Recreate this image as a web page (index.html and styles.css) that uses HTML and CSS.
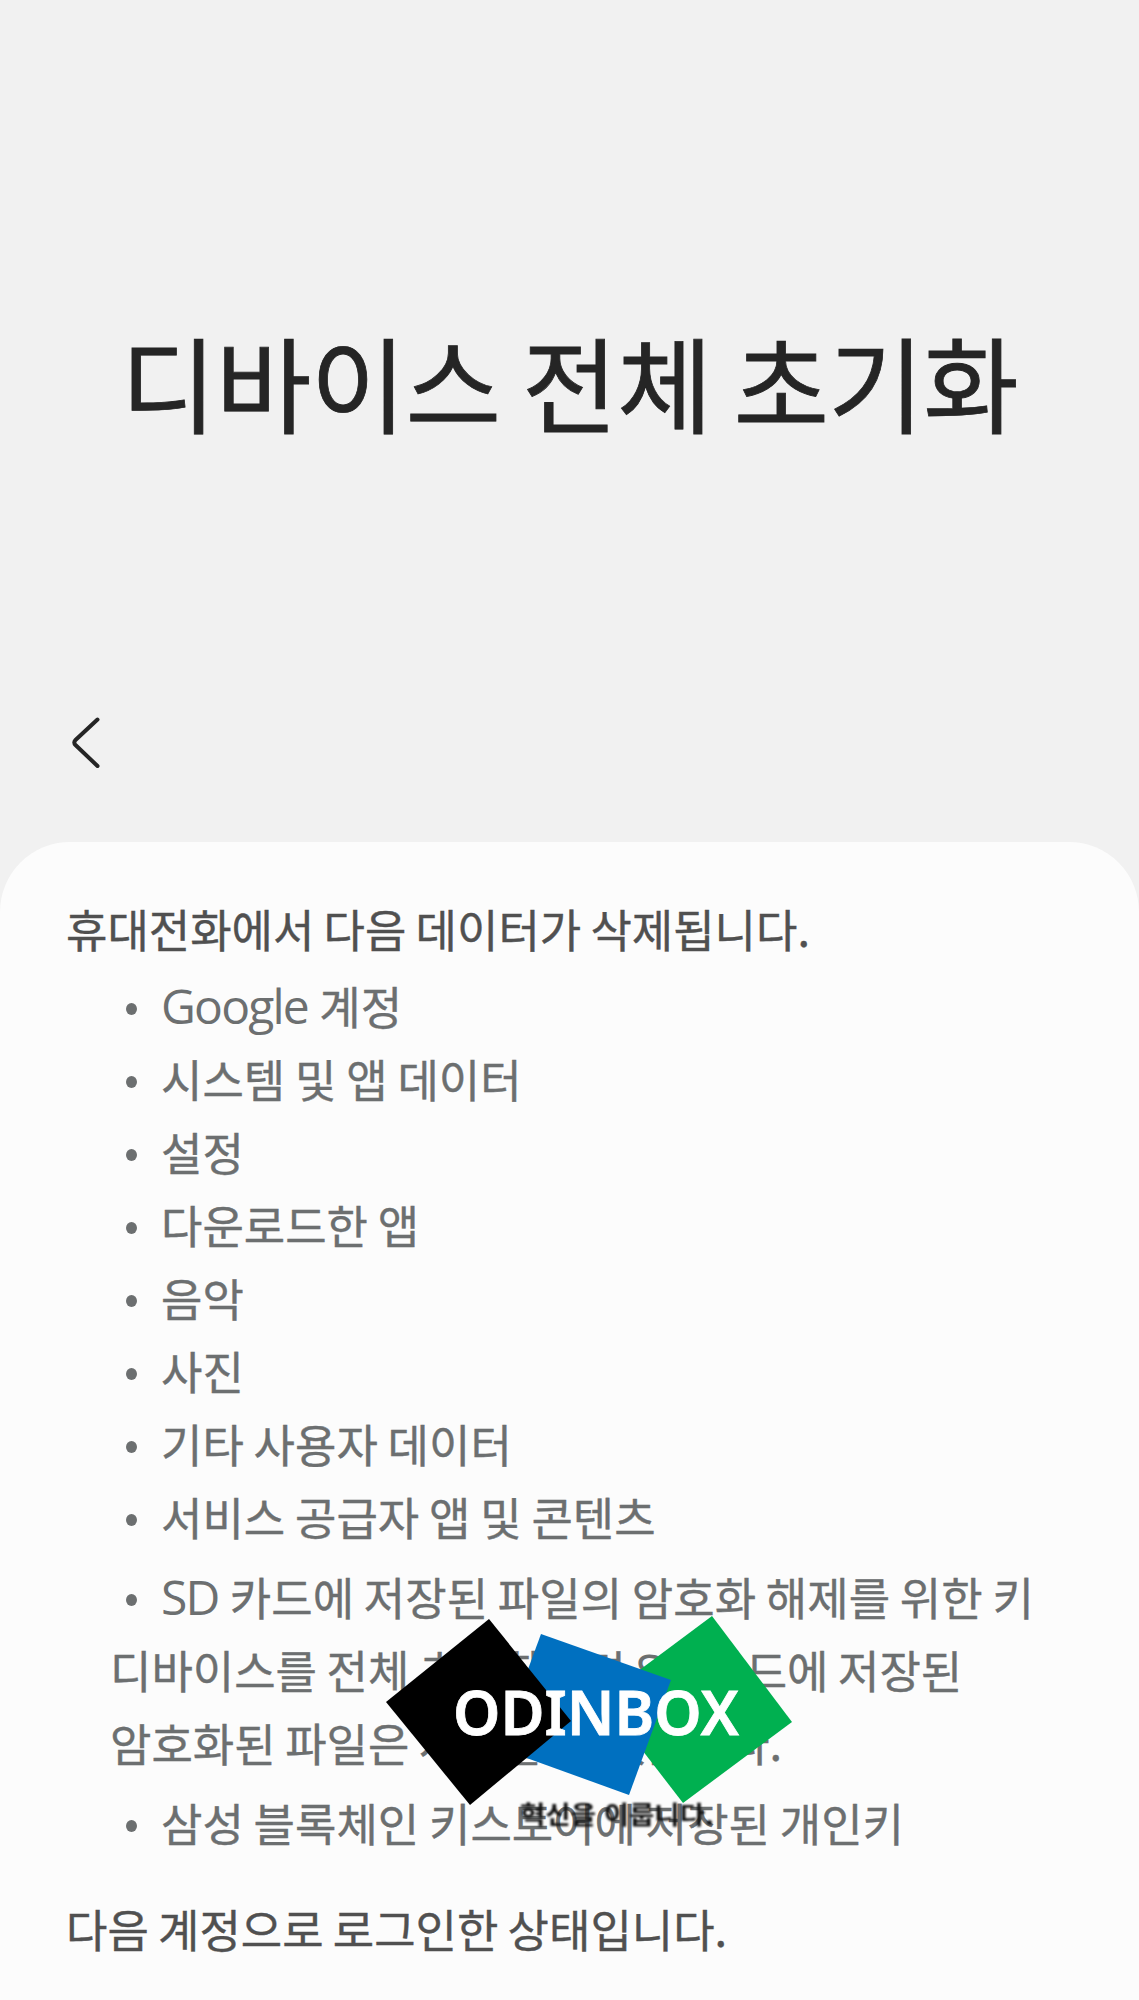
FILE: index.html
```
<!DOCTYPE html>
<html lang="ko">
<head>
    <meta charset="utf-8">
    <title>디바이스 전체 초기화</title>
    <link rel="stylesheet" href="styles.css">
</head>
<body>
    <header class="header">
        <h1>디바이스 전체 초기화</h1>
        <a class="back" href="#" aria-label="뒤로">
            <svg width="30" height="54" viewBox="0 0 30 54">
                <path d="M25.500 3.500 L3.500 24 Q1 26.500 3.500 29 L25.500 50" />
            </svg>
        </a>
    </header>

    <main class="panel">
        <p class="intro">휴대전화에서 다음 데이터가 삭제됩니다.</p>
        <ul class="data-list">
            <li><span class="latin">Google</span> 계정</li>
            <li>시스템 및 앱 데이터</li>
            <li>설정</li>
            <li>다운로드한 앱</li>
            <li>음악</li>
            <li>사진</li>
            <li>기타 사용자 데이터</li>
            <li>서비스 공급자 앱 및 콘텐츠</li>
            <li class="spaced"><span class="latin">SD</span> 카드에 저장된 파일의 암호화 해제를 위한 키</li>
        </ul>
        <p class="note">디바이스를 전체 초기화하면 <span class="latin">SD</span> 카드에 저장된<br>암호화된 파일은 사용할 수 없습니다.</p>
        <ul class="data-list">
            <li class="spaced">삼성 블록체인 키스토어에 저장된 개인키</li>
        </ul>
        <p class="account">다음 계정으로 로그인한 상태입니다.</p>
    </main>

    <svg class="watermark" width="440" height="260" viewBox="0 0 440 260">
        <polygon points="342,16 422,122 313,203 232,98" fill="#00b050" />
        <polygon points="171,34 301,80 259,195 129,148" fill="#0070c0" />
        <polygon points="119,19 201,121 100,205 16,102" fill="#000" />
        <text class="brand" x="83" y="135" textLength="286" lengthAdjust="spacingAndGlyphs">ODINBOX</text>
        <text class="slogan" x="150" y="224" textLength="194" lengthAdjust="spacingAndGlyphs">혁신을 이룹니다.</text>
    </svg>
</body>
</html>
```

FILE: styles.css
```
* {
    box-sizing: border-box;
}
body {
    position: relative;
    margin: 0;
    height: 2000px;
    overflow: hidden;
    background: #f1f1f1;
    font-family: "Noto Sans CJK KR", sans-serif;
}
h1, p, ul {
    margin: 0;
    padding: 0;
}
.header {
    height: 842px;
    padding-top: 306px;
}
h1 {
    color: #252525;
    font-size: 104px;
    font-weight: 400;
    line-height: 150px;
    letter-spacing: -0.7px;
    word-spacing: -7px;
    text-align: center;
    white-space: nowrap;
    -webkit-text-stroke: 0.8px;
}
.back {
    display: block;
    width: 30px;
    height: 54px;
    margin: 260px 0 0 72px;
}
.back svg {
    display: block;
    fill: none;
    stroke: #252525;
    stroke-width: 4;
    stroke-linecap: round;
}
.panel {
    height: 1158px;
    padding: 50px 0 0 66px;
    background: #fcfcfc;
    border-radius: 70px 70px 0 0;
    font-size: 45px;
    line-height: 73px;
    word-spacing: -3.4px;
    white-space: nowrap;
    -webkit-text-stroke: 0.4px;
}
.intro, .account {
    color: #505050;
}
.intro {
    margin-bottom: 4px;
}
.data-list {
    color: #6c6f70;
    list-style: none;
    word-spacing: -2.8px;
}
.data-list li {
    display: flex;
    align-items: center;
    white-space: pre;
}
.data-list li::before {
    content: "";
    width: 11px;
    height: 12px;
    margin: 6px 24px 0 60px;
    border-radius: 50%;
    background: #6c6f70;
}
.data-list .spaced {
    margin-top: 7px;
}
.latin {
    margin-right: 1.5px;
    font-family: "Open Sans", sans-serif;
    font-size: 48px;
    letter-spacing: -1.8px;
    -webkit-text-stroke: 0;
}
.note {
    padding-left: 44px;
    color: #6c6f70;
    word-spacing: -3px;
}
.note .latin {
    line-height: 1;
}
.account {
    margin-top: 33px;
}
.watermark {
    position: absolute;
    top: 1600px;
    left: 370px;
}
.brand {
    fill: #fff;
    font-family: "Noto Sans", sans-serif;
    font-size: 62px;
    font-weight: 600;
    stroke: #fff;
    stroke-width: 0.8px;
    filter: blur(0.5px);
}
.slogan {
    fill: #111;
    font-size: 25px;
    font-weight: 700;
    filter: blur(0.8px);
}
```
